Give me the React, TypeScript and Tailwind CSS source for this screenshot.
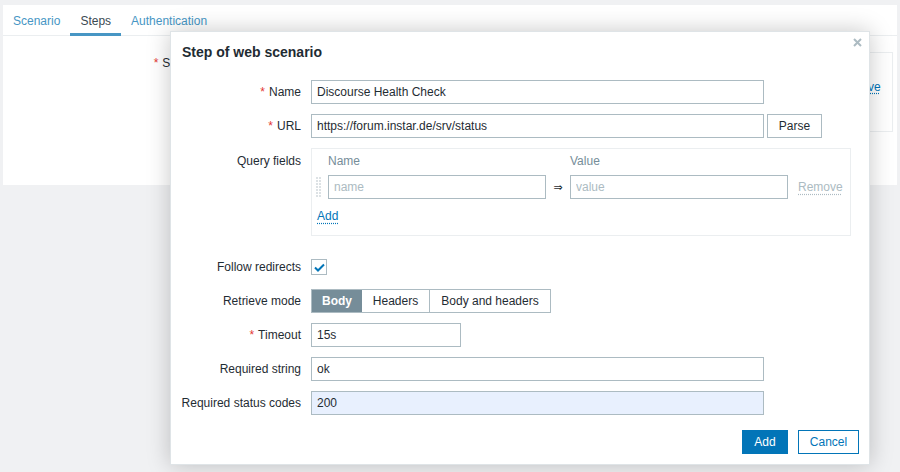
import React from 'react';

const inputCls =
  'h-[24px] border border-[#acbbc2] bg-white px-[5px] text-[12px] text-[#1f2c33] outline-none placeholder:text-[#acbbc2]';

function Req() {
  return <span className="mr-[4px] text-[#e33734]">*</span>;
}

function Row({ label, required, children }: { label: string; required?: boolean; children: React.ReactNode }) {
  return (
    <div className="flex h-[24px] items-center">
      <div className="w-[140px] shrink-0 pr-[10px] text-right leading-[14px]">
        {required && <Req />}
        {label}
      </div>
      {children}
    </div>
  );
}

function DragHandle() {
  const dots = [];
  for (let r = 0; r < 7; r++) {
    for (let c = 0; c < 2; c++) {
      dots.push(<rect key={`${r}-${c}`} x={c * 3} y={r * 3} width="2" height="2" fill="#dde2e5" />);
    }
  }
  return (
    <svg width="5" height="20" viewBox="0 0 5 20">
      {dots}
    </svg>
  );
}

export default function App() {
  return (
    <div className="relative h-[472px] overflow-hidden bg-[#f0f1f3] px-[3px] pt-[5px] font-['Liberation_Sans',Arial,sans-serif] text-[12px] text-[#1f2c33]">
      {/* background form card */}
      <div className="h-[180px] w-[894px] bg-white">
        <div className="flex h-[31px] border-b border-[#ebeef0]">
          <div className="flex items-center px-[10px] pt-[1px] text-[#4796c4]">Scenario</div>
          <div className="-mb-px flex items-center border-b-[3px] border-[#4796c4] px-[10px] pt-[4px] text-[#3b4a52]">Steps</div>
          <div className="flex items-center px-[10px] pt-[1px] text-[#4796c4]">Authentication</div>
        </div>
        <div className="flex pt-[16px]">
          <div className="w-[190px] shrink-0 pt-[4px] text-right leading-[14px]">
            <Req />
            Steps
          </div>
          <div className="ml-[10px] h-[80px] w-[690px] border border-[#ebeef0] pt-[7px]">
            <div className="flex h-[14px] leading-[14px] text-[#4796c4]">
              <span className="ml-[20px] text-[#768d99]">Name</span>
              <span className="ml-auto w-[56px]">Action</span>
            </div>
            <div className="mt-[6px] flex h-[14px] leading-[14px]">
              <span className="ml-[20px]">Discourse Health Check</span>
              <span className="ml-auto w-[56px] text-[#0275b8] underline decoration-dotted underline-offset-2">Remove</span>
            </div>
          </div>
        </div>
      </div>

      {/* modal */}
      <div className="absolute left-[170px] top-[31px] h-[434px] w-[700px] border border-[#dfe4e7] bg-white shadow-[0_0_22px_rgba(0,0,0,0.22)]">
        <div className="relative h-[38px] px-[11px] pt-[12px]">
          <div className="text-[14px] font-bold leading-[16px] text-[#1f2c33]">Step of web scenario</div>
          <svg className="absolute right-[7px] top-[6px]" width="9" height="9" viewBox="0 0 9 9">
            <path d="M1 1L8 8M8 1L1 8" stroke="#acbbc2" strokeWidth="2" />
          </svg>
        </div>

        <div className="flex flex-col gap-[10px] pt-[10px]">
          <Row label="Name" required>
            <input className={`${inputCls} w-[453px]`} defaultValue="Discourse Health Check" />
          </Row>
          <Row label="URL" required>
            <input className={`${inputCls} w-[453px]`} defaultValue="https://forum.instar.de/srv/status" />
            <button className="ml-[3px] h-[24px] w-[55px] border border-[#acbbc2] bg-white text-[12px] text-[#1f2c33]">
              Parse
            </button>
          </Row>

          <div className="flex">
            <div className="w-[140px] shrink-0 pr-[10px] pt-[6px] text-right leading-[14px]">Query fields</div>
            <div className="h-[88px] w-[540px] border border-[#ebeef0] pl-[4px] pt-[5px]">
              <div className="grid grid-cols-[12px_218px_24px_218px_auto] leading-[14px] text-[#768d99]">
                <span />
                <span>Name</span>
                <span />
                <span>Value</span>
                <span />
              </div>
              <div className="mt-[7px] grid h-[24px] grid-cols-[12px_218px_24px_218px_auto] items-center">
                <DragHandle />
                <input className={`${inputCls} w-[218px]`} placeholder="name" />
                <span className="pt-[2px] text-center font-['DejaVu_Sans',sans-serif] text-[11px] leading-[12px] text-[#1f2c33]">⇒</span>
                <input className={`${inputCls} w-[218px]`} placeholder="value" />
                <span className="ml-[10px] text-[#acbbc2] underline decoration-dotted underline-offset-[3px]">Remove</span>
              </div>
              <div className="mt-[10px] pl-[1px] leading-[14px]">
                <span className="text-[#0275b8] underline decoration-dotted underline-offset-[3px]">Add</span>
              </div>
            </div>
          </div>

          <div className="mt-[9px]">
            <Row label="Follow redirects">
              <div className="flex h-[16px] w-[16px] items-center justify-center border border-[#acbbc2] bg-white">
                <svg width="11" height="9" viewBox="0 0 11 9">
                  <path d="M1 4.5L4 7.5L10 1.5" fill="none" stroke="#0275b8" strokeWidth="2" />
                </svg>
              </div>
            </Row>
          </div>

          <Row label="Retrieve mode">
            <div className="flex h-[24px] border border-[#acbbc2]">
              <div className="flex w-[50px] items-center justify-center bg-[#768d99] font-bold text-white">Body</div>
              <div className="flex w-[68px] items-center justify-center border-r border-[#acbbc2]">Headers</div>
              <div className="flex w-[120px] items-center justify-center">Body and headers</div>
            </div>
          </Row>
          <Row label="Timeout" required>
            <input className={`${inputCls} w-[150px]`} defaultValue="15s" />
          </Row>
          <Row label="Required string">
            <input className={`${inputCls} w-[453px]`} defaultValue="ok" />
          </Row>
          <Row label="Required status codes">
            <input className={`${inputCls} w-[453px] !bg-[#e8f0fe]`} defaultValue="200" />
          </Row>
        </div>

        <div className="flex justify-end gap-[10px] pr-[10px] pt-[15px]">
          <button className="h-[24px] w-[46px] bg-[#0275b8] text-[12px] text-white">Add</button>
          <button className="h-[24px] w-[61px] border border-[#0275b8] bg-white text-[12px] text-[#0275b8]">Cancel</button>
        </div>
      </div>
    </div>
  );
}
